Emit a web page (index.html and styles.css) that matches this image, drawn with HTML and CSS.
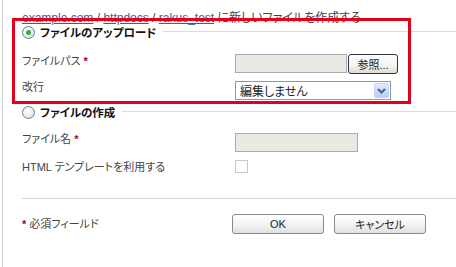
FILE: index.html
```html
<!DOCTYPE html>
<html lang="ja">
<head>
    <meta charset="UTF-8">
    <meta name="viewport" content="width=device-width, initial-scale=1.0">
    <title>新しいファイルを作成する</title>
    <link rel="stylesheet" href="styles.css">
</head>
<body>
    <div class="page">
        <!-- パンくず -->
        <div class="crumbs">
            <a href="#">example.com</a> / <a href="#">httpdocs</a> / <a href="#">rakus_test</a> に新しいファイルを作成する
        </div>

        <!-- アップロード -->
        <div class="legend">
            <span class="radio checked"></span>
            <span class="legend-text">ファイルのアップロード</span>
            <span class="legend-line"></span>
        </div>
        <div class="row row-path">
            <div class="label">ファイルパス <span class="req">*</span></div>
            <span class="input input-path"></span>
            <span class="btn btn-browse">参照...</span>
        </div>
        <div class="row row-nl">
            <div class="label">改行</div>
            <span class="select">
                <span class="select-text">編集しません</span>
                <span class="select-arrow">
                    <svg width="9" height="6" viewBox="0 0 9 6"><path d="M1 1 L4.5 4.5 L8 1" fill="none" stroke="#4d6185" stroke-width="2"/></svg>
                </span>
            </span>
        </div>

        <!-- 作成 -->
        <div class="legend legend-create">
            <span class="radio"></span>
            <span class="legend-text">ファイルの作成</span>
            <span class="legend-line"></span>
        </div>
        <div class="row row-name">
            <div class="label">ファイル名 <span class="req">*</span></div>
            <span class="input input-name"></span>
        </div>
        <div class="row row-tpl">
            <div class="label">HTML テンプレートを利用する</div>
            <span class="check"></span>
        </div>

        <div class="sep"></div>

        <div class="row footer">
            <div class="label"><span class="req">*</span> 必須フィールド</div>
            <span class="btn btn-ok">OK</span>
            <span class="btn btn-cancel">キャンセル</span>
        </div>

        <!-- 強調枠 -->
        <div class="mark"></div>
    </div>
</body>
</html>
```

FILE: styles.css
```css
body {
    margin: 0;
    background: #fff;
    color: #444;
    font-family: "Liberation Sans", "Noto Sans CJK JP", sans-serif;
    font-size: 11px;
    font-feature-settings: "palt";
}
.page {
    position: relative;
    margin-left: 2px;
    border-left: 1px solid #cdcdcd;
    min-height: 267px;
    padding: 11px 0 0 19px;
    box-sizing: border-box;
}
.crumbs {
    height: 14px;
    line-height: 14px;
    font-size: 12px;
}
.crumbs a {
    color: #2f64a8;
}
.legend {
    display: flex;
    align-items: center;
    height: 14px;
}
.legend-text {
    font-weight: bold;
    font-size: 11.5px;
    color: #111;
    margin-left: 5px;
}
.legend-line {
    flex: 1;
    border-top: 1px solid #d8dce0;
    margin: 0 0 1px 7px;
}
.radio {
    width: 11px;
    height: 11px;
    border: 1px solid #6f7f92;
    border-radius: 50%;
    background: radial-gradient(circle at 40% 35%, #fff 0, #e9ebee 55%, #cdd2d8 100%);
    position: relative;
}
.radio.checked::after {
    content: "";
    position: absolute;
    left: 3px;
    top: 3px;
    width: 5px;
    height: 5px;
    border-radius: 50%;
    background: #3ea43e;
}
.row {
    display: flex;
    align-items: flex-start;
}
.label {
    width: 213px;
    line-height: 14px;
}
.req {
    color: #a3001e;
    font-weight: bold;
}
.row-path { margin-top: 15px; }
.row-nl { margin-top: 7px; }
.row-nl .label { margin-top: -1px; }
.input {
    display: block;
    height: 17px;
    border: 1px solid #a6acb2;
    background: #ebe9e4;
}
.input-path { width: 110px; }
.btn {
    display: flex;
    align-items: center;
    justify-content: center;
    box-sizing: border-box;
    height: 20px;
    border: 1px solid #2b3545;
    border-radius: 3px;
    background: linear-gradient(#ffffff, #f4f4f0 60%, #dcdad2);
    color: #222;
    font-size: 11px;
}
.btn-browse {
    width: 50px;
    margin-left: 1px;
}
.select {
    display: flex;
    align-items: center;
    box-sizing: border-box;
    width: 156px;
    height: 19px;
    border: 1px solid #7f9db9;
    background: #fff;
    padding: 0 0 0 4px;
}
.select-text {
    flex: 1;
    color: #222;
    font-size: 12px;
}
.select-arrow {
    display: flex;
    align-items: center;
    justify-content: center;
    width: 15px;
    height: 15px;
    margin-right: 1px;
    border: 1px solid #c3d3fd;
    border-radius: 2px;
    box-sizing: border-box;
    background: linear-gradient(#e1eaff, #b9cdfb);
}
.legend-create { margin-top: 5px; }
.row-name { margin-top: 14px; }
.row-name .label { margin-top: -1px; }
.input-name { width: 121px; }
.row-tpl { margin-top: 8px; }
.check {
    display: block;
    width: 11px;
    height: 11px;
    border: 1px solid #c8c8c8;
    background: #fff;
}
.sep {
    margin-top: 24px;
    border-top: 1px solid #d6d6d6;
}
.footer {
    margin-top: 15px;
    align-items: center;
}
.footer .label {
    width: 210px;
    margin-top: -1px;
}
.btn-ok, .btn-cancel {
    width: 92px;
    border-color: #8a8a8a;
    background: linear-gradient(#ffffff, #f1f1f1 60%, #e0e0e0);
}
.btn-cancel { margin-left: 10px; }
.mark {
    position: absolute;
    left: 9px;
    top: 18px;
    width: 393px;
    height: 80px;
    border: 3px solid #e2001a;
}
```
